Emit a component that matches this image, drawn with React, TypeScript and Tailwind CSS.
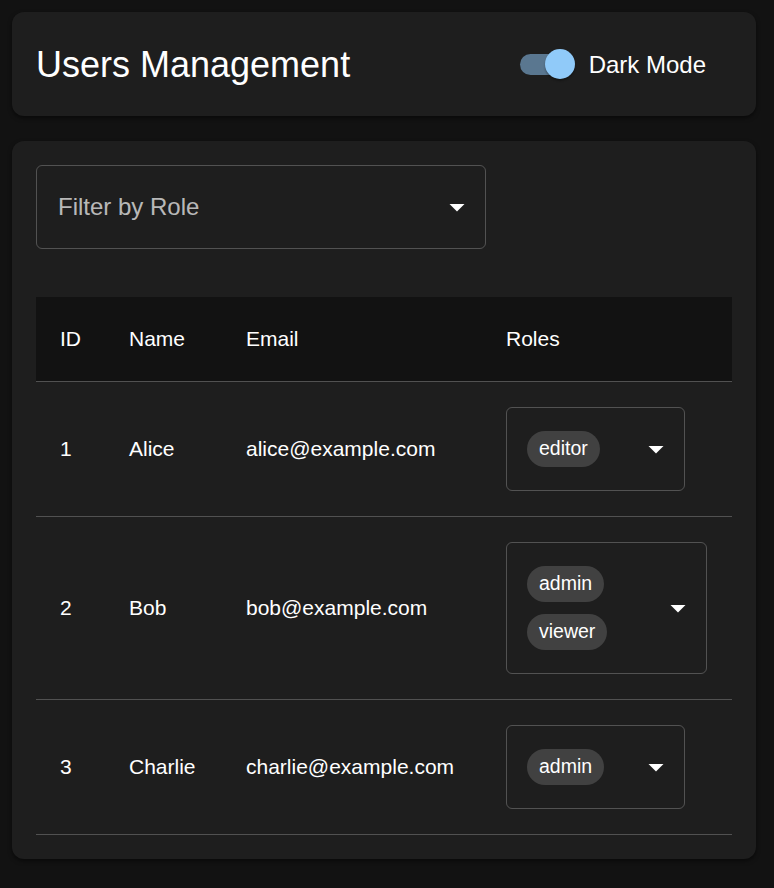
import React from 'react'

const users = [
    { id: 1, name: 'Alice', email: 'alice@example.com', roles: ['editor'], width: 'w-[179px]' },
    { id: 2, name: 'Bob', email: 'bob@example.com', roles: ['admin', 'viewer'], width: 'w-[201px]' },
    { id: 3, name: 'Charlie', email: 'charlie@example.com', roles: ['admin'], width: 'w-[179px]' },
]

const ArrowDrop = () => (
    <svg viewBox="0 0 24 24" className="w-9 h-9 shrink-0">
        <path d="M7 10l5 5 5-5z" fill="#ffffff" />
    </svg>
)

const Chip = ({ label }: { label: string }) => (
    <span className="inline-flex items-center h-9 px-3 rounded-full bg-[#414141] text-[19.5px] text-white leading-none">
        {label}
    </span>
)

const App = () => {
    return (
        <div className="min-h-screen bg-[#121212] pl-[12px] pr-[18px] pt-[12px] pb-[29px] font-['Liberation_Sans',Arial,sans-serif] text-white">
            {/* header */}
            <div className="bg-[#1e1e1e] rounded-[12px] shadow-[0_2px_4px_rgba(0,0,0,0.5)] px-6 pt-6 pb-[23px] flex items-center justify-between mb-[25px]">
                <h1 className="text-[36px] leading-[48px] font-normal">Users Management</h1>
                <label className="flex items-center mr-[26px] -ml-4">
                    <span className="relative w-[87px] h-[57px] p-[18px] block">
                        <span className="block w-full h-full rounded-full bg-[#5a7790]" />
                        <span className="absolute left-[43px] top-[13px] w-[30px] h-[30px] rounded-full bg-[#90caf9] shadow-[0_2px_2px_rgba(0,0,0,0.3)]" />
                    </span>
                    <span className="text-[24px] leading-9">Dark Mode</span>
                </label>
            </div>

            {/* content */}
            <div className="bg-[#1e1e1e] rounded-[12px] shadow-[0_2px_4px_rgba(0,0,0,0.5)] p-6">
                <div className="w-[450px] h-[84px] border border-white/[0.23] rounded-[6px] flex items-center pl-[21px] pr-[10px] mb-[48px]">
                    <span className="flex-1 text-[24px] text-white/70">Filter by Role</span>
                    <ArrowDrop />
                </div>

                <table className="w-full table-fixed border-collapse text-[21px]">
                    <colgroup>
                        <col className="w-[69px]" />
                        <col className="w-[117px]" />
                        <col className="w-[260px]" />
                        <col />
                    </colgroup>
                    <thead className="bg-[#121212]">
                        <tr className="border-b border-[#515151]">
                            <th className="text-left font-normal px-6 h-[84px]">ID</th>
                            <th className="text-left font-normal px-6">Name</th>
                            <th className="text-left font-normal px-6">Email</th>
                            <th className="text-left font-normal px-6">Roles</th>
                        </tr>
                    </thead>
                    <tbody>
                        {users.map((u) => (
                            <tr key={u.id} className="border-b border-[#515151]">
                                <td className="px-6 py-[25px]">{u.id}</td>
                                <td className="px-6 py-[25px]">{u.name}</td>
                                <td className="px-6 py-[25px]">{u.email}</td>
                                <td className="px-6 py-[25px]">
                                    <div className={`${u.width} border border-white/[0.23] rounded-[6px] flex items-center pl-[20px] pr-[10px] py-[23px]`}>
                                        <div className="flex-1 flex flex-col items-start gap-3">
                                            {u.roles.map((r) => (
                                                <Chip key={r} label={r} />
                                            ))}
                                        </div>
                                        <ArrowDrop />
                                    </div>
                                </td>
                            </tr>
                        ))}
                    </tbody>
                </table>
            </div>
        </div>
    )
}

export default App
